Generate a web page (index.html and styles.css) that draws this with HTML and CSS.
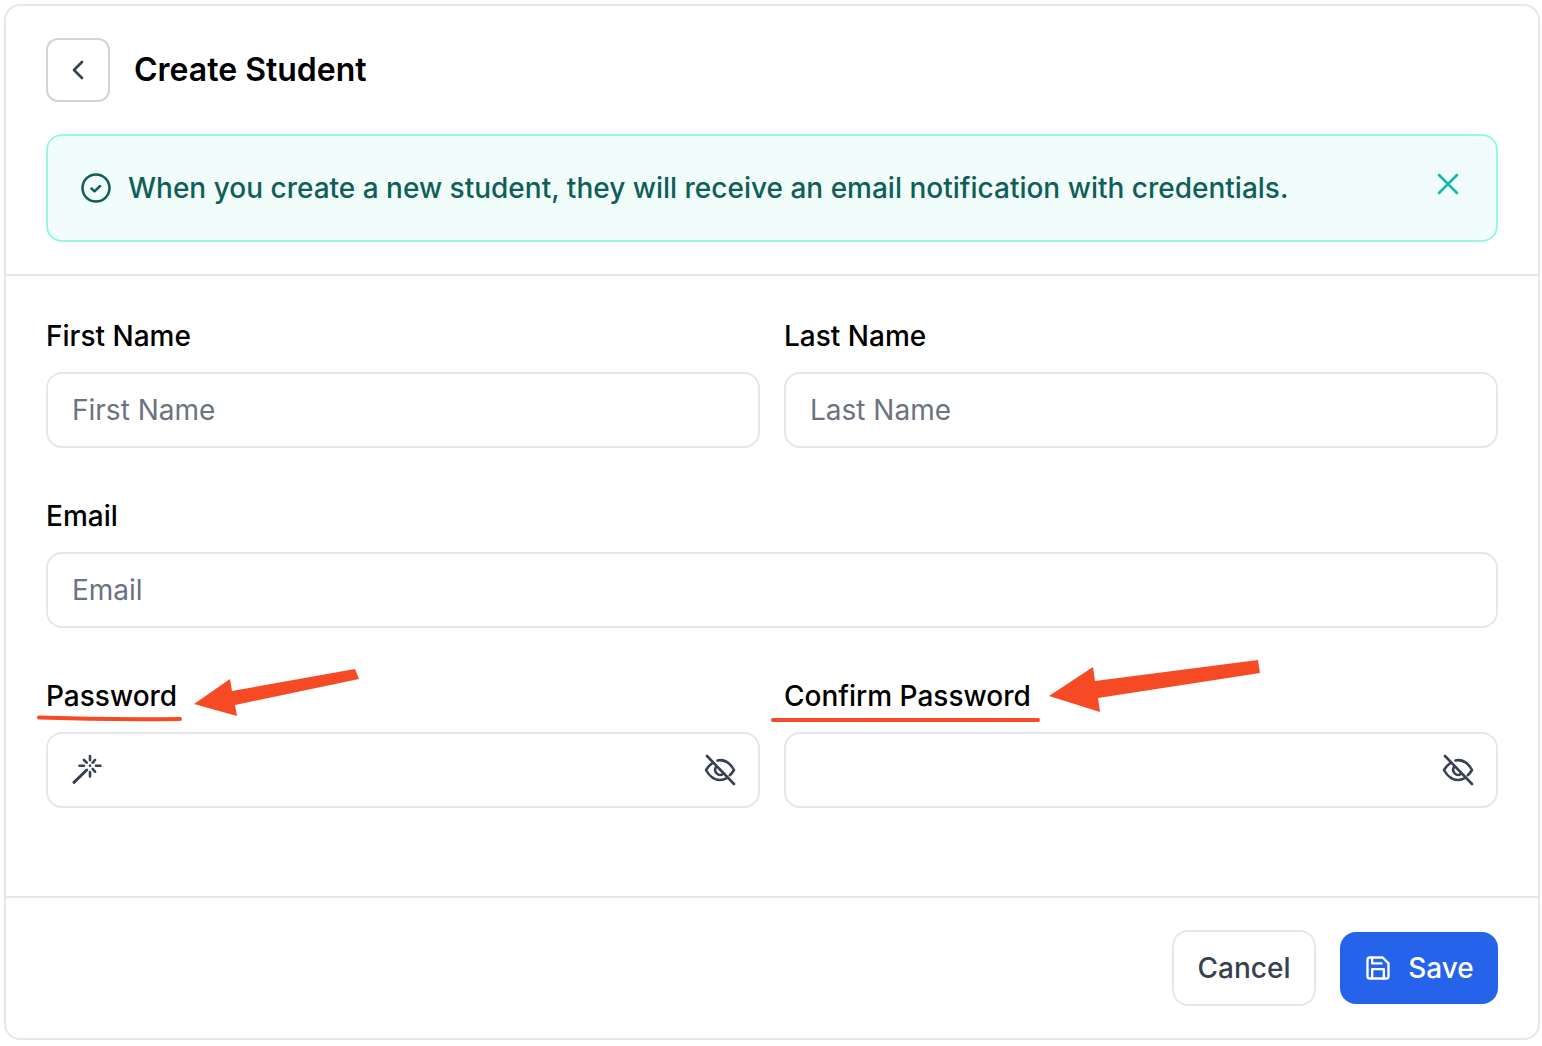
FILE: index.html
```html
<!DOCTYPE html>
<html lang="en">
<head>
    <meta charset="UTF-8" />
    <meta name="viewport" content="width=device-width, initial-scale=1.0" />
    <title>Create Student</title>
    <link rel="stylesheet" href="styles.css">
</head>
<body>
    <div class="card">
        <div class="card-head">
            <div class="title-row">
                <button type="button" class="back-btn" aria-label="Back">
                    <svg class="icon-back" viewBox="0 0 24 24"><path d="m15 18-6-6 6-6"/></svg>
                </button>
                <h1>Create Student</h1>
            </div>
            <div class="notice">
                <svg class="icon-check" viewBox="0 0 32 32"><circle cx="16" cy="16" r="13.5"/><path d="m11.5 16.5 3 2.8 5.5-5.3"/></svg>
                <p>When you create a new student, they will receive an email notification with credentials.</p>
                <svg class="icon-close" viewBox="0 0 32 32"><path d="M7 7l18 18M25 7 7 25"/></svg>
            </div>
        </div>

        <form class="card-form">
            <div class="row">
                <div class="group">
                    <label>First Name</label>
                    <div class="field"><input type="text" placeholder="First Name"></div>
                </div>
                <div class="group">
                    <label>Last Name</label>
                    <div class="field"><input type="text" placeholder="Last Name"></div>
                </div>
            </div>
            <div class="group">
                <label>Email</label>
                <div class="field"><input type="text" placeholder="Email"></div>
            </div>
            <div class="row">
                <div class="group">
                    <label>Password</label>
                    <div class="field">
                        <svg class="icon-wand" viewBox="0 0 32 32"><path d="M2 28.300 14.700 16"/><path class="wand-rays" d="M18 2v4.300M18 18v4.500M7.500 11.700H12M24 11.700h4.500M12 6l2.700 2.700M23 6l-2.300 2.700M20.700 15l2.300 2.700M18 11.600v.2"/></svg>
                        <input type="password">
                        <svg class="icon-eye" viewBox="0 0 32 32"><path d="M3 2l27 28"/><path d="M8.500 9C5.800 10.800 3.500 13.500 2 16c3 5.500 8 10 14 10 2.500 0 4.800-.7 7-2M13.500 6.400c.8-.2 1.700-.3 2.500-.3 6 0 11 4.400 14 9.900-1 1.700-2.500 3.600-4.200 5.200"/><path d="M12.200 12.800a5 5 0 0 0 7 7"/></svg>
                    </div>
                </div>
                <div class="group">
                    <label>Confirm Password</label>
                    <div class="field">
                        <input type="password">
                        <svg class="icon-eye" viewBox="0 0 32 32"><path d="M3 2l27 28"/><path d="M8.500 9C5.800 10.800 3.500 13.500 2 16c3 5.500 8 10 14 10 2.500 0 4.800-.7 7-2M13.500 6.400c.8-.2 1.700-.3 2.500-.3 6 0 11 4.400 14 9.900-1 1.700-2.500 3.600-4.200 5.200"/><path d="M12.200 12.800a5 5 0 0 0 7 7"/></svg>
                    </div>
                </div>
            </div>
        </form>

        <div class="card-foot">
            <button type="button" class="btn btn-cancel">Cancel</button>
            <button type="button" class="btn btn-save">
                <svg class="icon-save" viewBox="0 0 24 24"><path d="M19 21H5a2 2 0 0 1-2-2V5a2 2 0 0 1 2-2h11l5 5v11a2 2 0 0 1-2 2z"/><path d="M17 21v-8H7v8M7 3v5h8"/></svg>
                Save
            </button>
        </div>
    </div>

    <!-- red marks drawn over the screenshot -->
    <svg class="marks" viewBox="0 0 1542 1046">
        <path class="mark-fill" d="M194 704 230 679 232 691 355 669 359 679 235 705 237 716z"/>
        <path class="mark-fill" d="M1049 696 1093 667 1095 681 1258 660 1260 673 1098 698 1100 712z"/>
        <path class="mark-line" d="M39 717.500Q110 720 180 719"/>
        <path class="mark-line" d="M773 720Q900 720.500 1038 720"/>
    </svg>
</body>
</html>
```

FILE: styles.css
```css
* {
    margin: 0;
    padding: 0;
    box-sizing: border-box;
}

body {
    position: relative;
    width: 1542px;
    height: 1046px;
    padding: 4px 2px 6px 4px;
    background-color: #fff;
    font-family: "Inter", sans-serif;
    overflow: hidden;
}

svg {
    fill: none;
    stroke-linecap: round;
    stroke-linejoin: round;
    flex-shrink: 0;
}

.card {
    height: 1036px;
    background: #fff;
    border: 2px solid #e5e7eb;
    border-radius: 16px;
    display: flex;
    flex-direction: column;
}

.card-head {
    padding: 32px 40px;
    border-bottom: 2px solid #e5e7eb;
}

.title-row {
    display: flex;
    align-items: center;
    gap: 24px;
    margin-bottom: 32px;
}

.back-btn {
    width: 64px;
    height: 64px;
    display: flex;
    align-items: center;
    justify-content: center;
    background: #fff;
    border: 2px solid #d1d5db;
    border-radius: 12px;
}

.icon-back {
    width: 32px;
    height: 32px;
    stroke: #374151;
    stroke-width: 2;
}

h1 {
    font-size: 32px;
    line-height: 40px;
    font-weight: 600;
    color: #000;
}

.notice {
    height: 108px;
    display: flex;
    align-items: center;
    padding: 0 32px;
    gap: 16px;
    background: #f0fdfa;
    border: 2px solid #99f6e4;
    border-radius: 16px;
}

.notice p {
    flex: 1;
    font-size: 28px;
    line-height: 40px;
    font-weight: 500;
    color: #115e59;
}

.icon-check {
    width: 32px;
    height: 32px;
    stroke: #115e59;
    stroke-width: 2.5;
}

.icon-close {
    width: 32px;
    height: 32px;
    margin-bottom: 8px;
    stroke: #14b8a6;
    stroke-width: 2.5;
}

.card-form {
    flex: 1;
    padding: 40px 40px 0;
    display: flex;
    flex-direction: column;
    gap: 48px;
}

.row {
    display: grid;
    grid-template-columns: 1fr 1fr;
    gap: 24px;
}

.group label {
    display: block;
    margin-bottom: 16px;
    font-size: 28px;
    line-height: 40px;
    font-weight: 500;
    color: #000;
}

.field {
    height: 76px;
    display: flex;
    align-items: center;
    gap: 16px;
    padding: 0 24px;
    background: #fff;
    border: 2px solid #e5e7eb;
    border-radius: 16px;
}

.field input {
    flex: 1;
    min-width: 0;
    border: none;
    outline: none;
    background: transparent;
    font-family: inherit;
    font-size: 28px;
    color: #111827;
}

.field input::placeholder {
    color: #6b7280;
    opacity: 1;
}

.icon-wand,
.icon-eye {
    width: 32px;
    height: 32px;
    stroke: #374151;
    stroke-width: 2.6;
}

.icon-wand {
    stroke-width: 3;
}

.wand-rays {
    stroke-width: 2.6;
}

.icon-eye {
    margin-right: -2px;
}

.card-foot {
    display: flex;
    justify-content: flex-end;
    align-items: center;
    gap: 24px;
    padding: 32px 40px;
    border-top: 2px solid #e5e7eb;
}

.btn {
    display: flex;
    align-items: center;
    justify-content: center;
    font-family: inherit;
    font-size: 28px;
    font-weight: 500;
    border-radius: 16px;
}

.btn-cancel {
    width: 144px;
    height: 76px;
    background: #fff;
    color: #374151;
    border: 2px solid #e5e7eb;
}

.btn-save {
    width: 158px;
    height: 72px;
    gap: 16px;
    background: #2563eb;
    color: #fff;
    border: none;
}

.icon-save {
    width: 28px;
    height: 28px;
    stroke: #fff;
    stroke-width: 2;
}

.marks {
    position: absolute;
    left: 0;
    top: 0;
    width: 1542px;
    height: 1046px;
    pointer-events: none;
}

.mark-fill {
    fill: #f64a25;
}

.mark-line {
    stroke: #f64a25;
    stroke-width: 4;
}
```
